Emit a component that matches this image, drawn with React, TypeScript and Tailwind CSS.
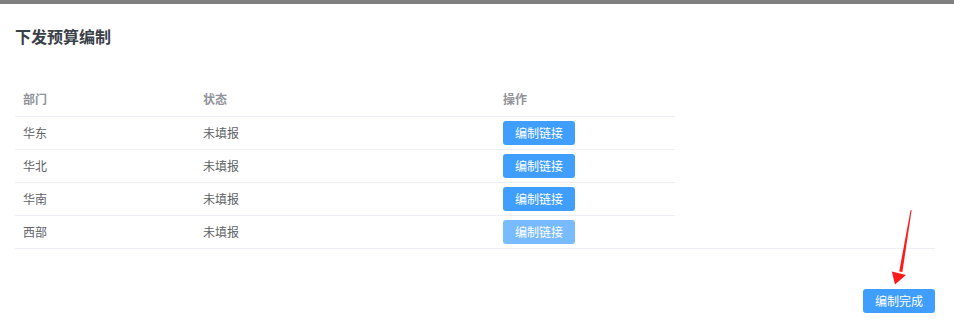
import React from "react";

const rows = [
  { dept: "华东", status: "未填报", disabled: false },
  { dept: "华北", status: "未填报", disabled: false },
  { dept: "华南", status: "未填报", disabled: false },
  { dept: "西部", status: "未填报", disabled: true },
];

export default function App() {
  return (
    <div
      className="w-[954px] h-[330px] bg-white relative overflow-hidden"
      style={{ fontFamily: '"Noto Sans CJK SC", "Noto Sans", sans-serif' }}
    >
      <div className="h-[4px] bg-[#7f7f7f]" />
      <div className="pl-[15px] pr-[19px]">
        <h1 className="mt-[20px] text-[16px] leading-[24px] font-bold text-[#3a4048]">下发预算编制</h1>
        <div className="mt-[35px] border-b border-[#ebeef5]">
          <table className="w-[660px] border-collapse text-[12px]">
            <colgroup>
              <col className="w-[180px]" />
              <col className="w-[300px]" />
              <col className="w-[180px]" />
            </colgroup>
            <thead>
              <tr className="h-[33px] border-b border-[#ebeef5]">
                <th className="px-[8px] text-left font-bold text-[#909399]">部门</th>
                <th className="px-[8px] text-left font-bold text-[#909399]">状态</th>
                <th className="px-[8px] text-left font-bold text-[#909399]">操作</th>
              </tr>
            </thead>
            <tbody>
              {rows.map((r, i) => (
                <tr
                  key={r.dept}
                  className={i < rows.length - 1 ? "h-[33px] border-b border-[#ebeef5]" : "h-[33px]"}
                >
                  <td className="px-[8px] text-[#606266]">{r.dept}</td>
                  <td className="px-[8px] text-[#606266]">{r.status}</td>
                  <td className="px-[8px]">
                    <button
                      className={
                        r.disabled
                          ? "w-[72px] h-[24px] rounded-[3px] bg-[#79bbff] text-white text-[12px] leading-[24px] flex items-center justify-center"
                          : "w-[72px] h-[24px] rounded-[3px] bg-[#409eff] text-white text-[12px] leading-[24px] flex items-center justify-center"
                      }
                    >
                      编制链接
                    </button>
                  </td>
                </tr>
              ))}
            </tbody>
          </table>
        </div>
        <div className="mt-[40px] flex justify-end">
          <button className="w-[72px] h-[24px] rounded-[3px] bg-[#409eff] text-white text-[12px] flex items-center justify-center">
            编制完成
          </button>
        </div>
      </div>
      <svg
        className="absolute left-0 top-0 pointer-events-none"
        width="954"
        height="330"
        viewBox="0 0 954 330"
      >
        <path d="M910.6 210 L911.6 210.2 L902.4 272 L899.2 271.4 Z" fill="#ff1a1a" />
        <path d="M891.8 271.5 L906 275 L895 284.5 Z" fill="#ff1a1a" />
      </svg>
    </div>
  );
}
